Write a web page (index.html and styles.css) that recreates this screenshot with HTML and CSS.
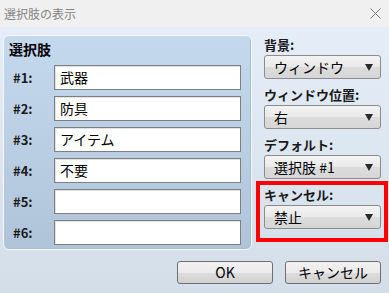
FILE: index.html
```html
<!DOCTYPE html>
<html lang="ja">
<head>
<meta charset="utf-8">
<link rel="stylesheet" href="styles.css">
</head>
<body>
<div class="window">
  <div class="titlebar">
    <span class="title">選択肢の表示</span>
    <svg class="close" width="11" height="11" viewBox="0 0 11 11"><path d="M0.5 0.5 L10.5 10.5 M10.5 0.5 L0.5 10.5" stroke="#7a7a7a" stroke-width="1" fill="none"/></svg>
  </div>
  <div class="content">
    <div class="main">
      <div class="panel">
        <div class="panel-title">選択肢</div>
        <div class="rows">
          <div class="row"><span class="row-label">#1:</span><div class="field">武器</div></div>
          <div class="row"><span class="row-label">#2:</span><div class="field">防具</div></div>
          <div class="row"><span class="row-label">#3:</span><div class="field">アイテム</div></div>
          <div class="row"><span class="row-label">#4:</span><div class="field">不要</div></div>
          <div class="row"><span class="row-label">#5:</span><div class="field"></div></div>
          <div class="row"><span class="row-label">#6:</span><div class="field"></div></div>
        </div>
      </div>
      <div class="side">
        <div class="group">
          <div class="group-label">背景:</div>
          <div class="select"><span>ウィンドウ</span><i class="arrow"></i></div>
        </div>
        <div class="group">
          <div class="group-label">ウィンドウ位置:</div>
          <div class="select"><span>右</span><i class="arrow"></i></div>
        </div>
        <div class="group">
          <div class="group-label">デフォルト:</div>
          <div class="select"><span>選択肢 #1</span><i class="arrow"></i></div>
        </div>
        <div class="group highlighted">
          <div class="group-label">キャンセル:</div>
          <div class="select"><span>禁止</span><i class="arrow"></i></div>
        </div>
      </div>
    </div>
    <div class="buttons">
      <div class="button">OK</div>
      <div class="button">キャンセル</div>
    </div>
  </div>
</div>
</body>
</html>
```
FILE: styles.css
```css
html, body {
  margin: 0;
  padding: 0;
}
body {
  width: 389px;
  height: 293px;
  overflow: hidden;
  font-family: "Noto Sans CJK JP", "Noto Sans", sans-serif;
  color: #000;
}
.window {
  width: 389px;
  height: 293px;
  display: flex;
  flex-direction: column;
  background: linear-gradient(to bottom, #e6eff9 0%, #dbe5f0 60%, #d3dee9 100%);
}
.titlebar {
  height: 27px;
  flex: none;
  background: #f0f0f0;
  display: flex;
  align-items: center;
  justify-content: space-between;
  padding: 0 8px 0 4px;
}
.title {
  font-size: 12px;
  color: #858585;
  line-height: 14px;
}
.close {
  display: block;
  margin-top: -1px;
}
.content {
  flex: 1;
  display: flex;
  flex-direction: column;
  padding: 8px 8px 0 3px;
}
.main {
  display: flex;
  gap: 12px;
}
.panel {
  width: 249px;
  height: 215px;
  box-sizing: border-box;
  border: 1px solid #f4f8fc;
  border-radius: 6px;
  background: linear-gradient(to bottom, #c5d9ee 0%, #bacfe4 50%, #b0c4d9 100%);
  box-shadow: inset -1px -1px 0 #a9bdd2;
  padding: 3px 0 0 0;
}
.panel-title {
  font-size: 14px;
  font-weight: bold;
  line-height: 20px;
  height: 20px;
  padding-left: 5px;
}
.rows {
  margin-top: 6px;
  display: flex;
  flex-direction: column;
  gap: 6px;
}
.row {
  display: flex;
  align-items: center;
  height: 25px;
}
.row-label {
  width: 50px;
  box-sizing: border-box;
  padding-left: 9px;
  font-size: 13px;
  font-weight: bold;
  color: #1a1a1a;
}
.field {
  width: 187px;
  height: 25px;
  box-sizing: border-box;
  background: #fff;
  border: 1px solid #7f7f7f;
  box-shadow: inset 1px 1px 0 #e2e2e2;
  font-size: 14px;
  line-height: 23px;
  padding-left: 5px;
}
.side {
  display: flex;
  flex-direction: column;
  gap: 6px;
  width: 117px;
}
.group {
  display: flex;
  flex-direction: column;
}
.group-label {
  height: 20px;
  line-height: 20px;
  font-size: 13px;
  font-weight: bold;
  color: #1a1a1a;
}
.select {
  height: 24px;
  box-sizing: border-box;
  border: 1px solid #8c8c8c;
  border-radius: 3px;
  background: linear-gradient(to bottom, #f3f3f3 0%, #e9e9e9 50%, #dcdcdc 51%, #d6d6d6 100%);
  display: flex;
  align-items: center;
  justify-content: space-between;
  padding: 0 7px 0 9px;
  font-size: 14px;
}
.arrow {
  width: 0;
  height: 0;
  border-left: 4px solid transparent;
  border-right: 4px solid transparent;
  border-top: 7px solid #2a2a2a;
}
.highlighted {
  position: relative;
}
.highlighted::after {
  content: "";
  position: absolute;
  left: -8px;
  top: -4px;
  right: -7px;
  bottom: -13px;
  border: 4px solid #ff0000;
  pointer-events: none;
}
.buttons {
  display: flex;
  justify-content: flex-end;
  gap: 12px;
  margin-top: 11px;
}
.button {
  width: 96px;
  height: 23px;
  box-sizing: border-box;
  border: 1px solid #707070;
  border-radius: 3px;
  background: linear-gradient(to bottom, #f2f2f2 0%, #ebebeb 50%, #dddddd 51%, #d0d0d0 100%);
  font-size: 14px;
  line-height: 21px;
  text-align: center;
}
```
